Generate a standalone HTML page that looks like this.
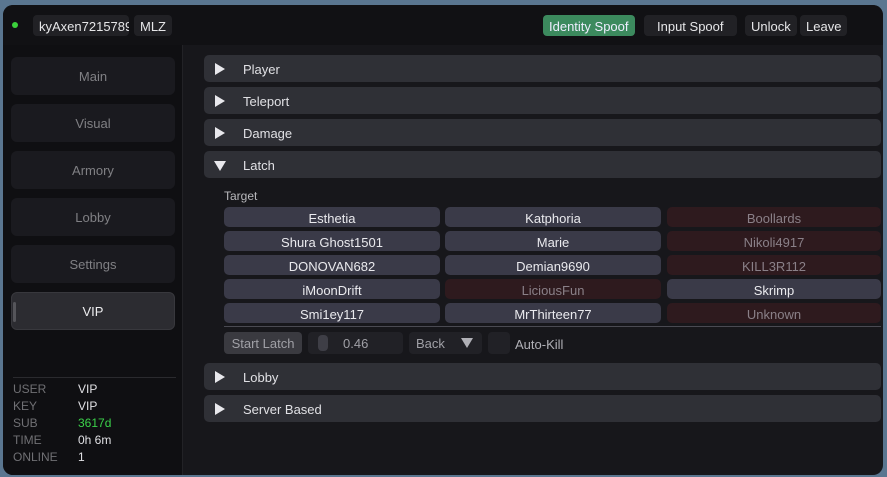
<!DOCTYPE html>
<html><head><style>
*{margin:0;padding:0;box-sizing:border-box}
body{width:887px;height:477px;overflow:hidden;background:#5a7690;font-family:"Liberation Sans",sans-serif;font-size:13px;color:#d8d8dc;position:relative}
.win{position:absolute;left:3px;top:5px;width:880px;height:470px;background:#17171b;border-radius:10px;overflow:hidden}
.title{position:absolute;left:0;top:0;width:880px;height:40px;background:#111114}
.side{position:absolute;left:0;top:40px;width:180px;height:430px;background:#0f0f12;border-right:1px solid #222226}
.a{position:absolute}
.pill{position:absolute;height:21px;line-height:23px;border-radius:4px;background:#212125;color:#e6e6e8;padding:0 6px;font-size:13px}
.sb{position:absolute;left:8px;width:164px;height:38px;border-radius:6px;background:#1a1a1f;color:#808084;text-align:center;line-height:40px;font-size:13px}
.hd{position:absolute;left:201px;width:677px;height:27px;border-radius:5px;background:#2f3036;line-height:29px;font-size:13px;color:#e0e0e4}
.hd .t{position:absolute;left:39px}
.tri{position:absolute;left:11px;top:8px;width:0;height:0;border-top:6px solid transparent;border-bottom:6px solid transparent;border-left:10px solid #e8e8ec}
.trid{position:absolute;left:10px;top:10px;width:0;height:0;border-left:6px solid transparent;border-right:6px solid transparent;border-top:10px solid #e8e8ec}
.b{position:absolute;width:216px;height:20px;border-radius:5px;background:#3a3a48;text-align:center;line-height:24px;font-size:13px;color:#eaeaee}
.r{background:#2e1a1e;color:#8a8088}
.info{position:absolute;left:10px;font-size:12px;color:#707074}
.iv{position:absolute;left:75px;font-size:12px;color:#e0e0e4}
</style></head><body>
<div class="win">
<div class="title"></div>
<div class="a" style="left:9px;top:17px;width:6px;height:6px;border-radius:50%;background:#3bd13b"></div>
<div class="pill" style="left:30px;top:10px;width:96px;overflow:hidden;white-space:nowrap">kyAxen7215789</div>
<div class="pill" style="left:131px;top:10px">MLZ</div>
<div class="pill" style="left:540px;top:10px;background:#3c8a5e;color:#eef">Identity Spoof</div>
<div class="pill" style="left:641px;top:10px;padding:0 13px">Input Spoof</div>
<div class="pill" style="left:742px;top:10px">Unlock</div>
<div class="pill" style="left:797px;top:10px">Leave</div>
<div class="side"></div>
<div class="sb" style="top:52px">Main</div>
<div class="sb" style="top:99px">Visual</div>
<div class="sb" style="top:146px">Armory</div>
<div class="sb" style="top:193px">Lobby</div>
<div class="sb" style="top:240px">Settings</div>
<div class="sb" style="top:287px;background:#2c2c31;color:#ececee;border:1px solid #38383d;line-height:38px"><div class="a" style="left:1px;top:9px;width:3px;height:20px;background:#55555a;border-radius:2px"></div>VIP</div>
<div class="a" style="left:10px;top:372px;width:163px;height:1px;background:#2a2a2e"></div>
<div class="info" style="top:377px">USER</div><div class="iv" style="top:377px">VIP</div>
<div class="info" style="top:394px">KEY</div><div class="iv" style="top:394px">VIP</div>
<div class="info" style="top:411px">SUB</div><div class="iv" style="top:411px;color:#3bd14a">3617d</div>
<div class="info" style="top:428px">TIME</div><div class="iv" style="top:428px">0h 6m</div>
<div class="info" style="top:445px">ONLINE</div><div class="iv" style="top:445px">1</div>

<div class="hd" style="top:50px"><div class="tri"></div><span class="t">Player</span></div>
<div class="hd" style="top:82px"><div class="tri"></div><span class="t">Teleport</span></div>
<div class="hd" style="top:114px"><div class="tri"></div><span class="t">Damage</span></div>
<div class="hd" style="top:146px"><div class="trid"></div><span class="t">Latch</span></div>
<div class="a" style="left:221px;top:184px;font-size:12px;color:#b8b8bc">Target</div>
<div class="b" style="left:221px;top:202px">Esthetia</div>
<div class="b" style="left:442px;top:202px">Katphoria</div>
<div class="b r" style="left:664px;top:202px;width:214px">Boollards</div>
<div class="b" style="left:221px;top:226px">Shura Ghost1501</div>
<div class="b" style="left:442px;top:226px">Marie</div>
<div class="b r" style="left:664px;top:226px;width:214px">Nikoli4917</div>
<div class="b" style="left:221px;top:250px">DONOVAN682</div>
<div class="b" style="left:442px;top:250px">Demian9690</div>
<div class="b r" style="left:664px;top:250px;width:214px">KILL3R112</div>
<div class="b" style="left:221px;top:274px">iMoonDrift</div>
<div class="b r" style="left:442px;top:274px">LiciousFun</div>
<div class="b" style="left:664px;top:274px;width:214px">Skrimp</div>
<div class="b" style="left:221px;top:298px">Smi1ey117</div>
<div class="b" style="left:442px;top:298px">MrThirteen77</div>
<div class="b r" style="left:664px;top:298px;width:214px">Unknown</div>
<div class="a" style="left:221px;top:321px;width:657px;height:1px;background:#4a4a52"></div>
<div class="a" style="left:221px;top:327px;width:78px;height:22px;border-radius:4px;background:#3a3a40;color:#a0a0a6;text-align:center;line-height:24px">Start Latch</div>
<div class="a" style="left:305px;top:327px;width:95px;height:22px;border-radius:4px;background:#212126;color:#a0a0a6;line-height:24px"><div class="a" style="left:10px;top:3px;width:10px;height:16px;border-radius:4px;background:#3e3e46"></div><span class="a" style="left:35px">0.46</span></div>
<div class="a" style="left:406px;top:327px;width:73px;height:22px;border-radius:4px;background:#212126;color:#a0a0a6;line-height:24px"><span class="a" style="left:7px">Back</span><div class="a" style="left:52px;top:6px;border-left:6px solid transparent;border-right:6px solid transparent;border-top:10px solid #b0b0b6"></div></div>
<div class="a" style="left:485px;top:327px;width:22px;height:22px;border-radius:4px;background:#212126"></div>
<div class="a" style="left:512px;top:332px;color:#b0b0b6">Auto-Kill</div>
<div class="hd" style="top:358px"><div class="tri"></div><span class="t">Lobby</span></div>
<div class="hd" style="top:390px"><div class="tri"></div><span class="t">Server Based</span></div>
</div>
</body></html>
